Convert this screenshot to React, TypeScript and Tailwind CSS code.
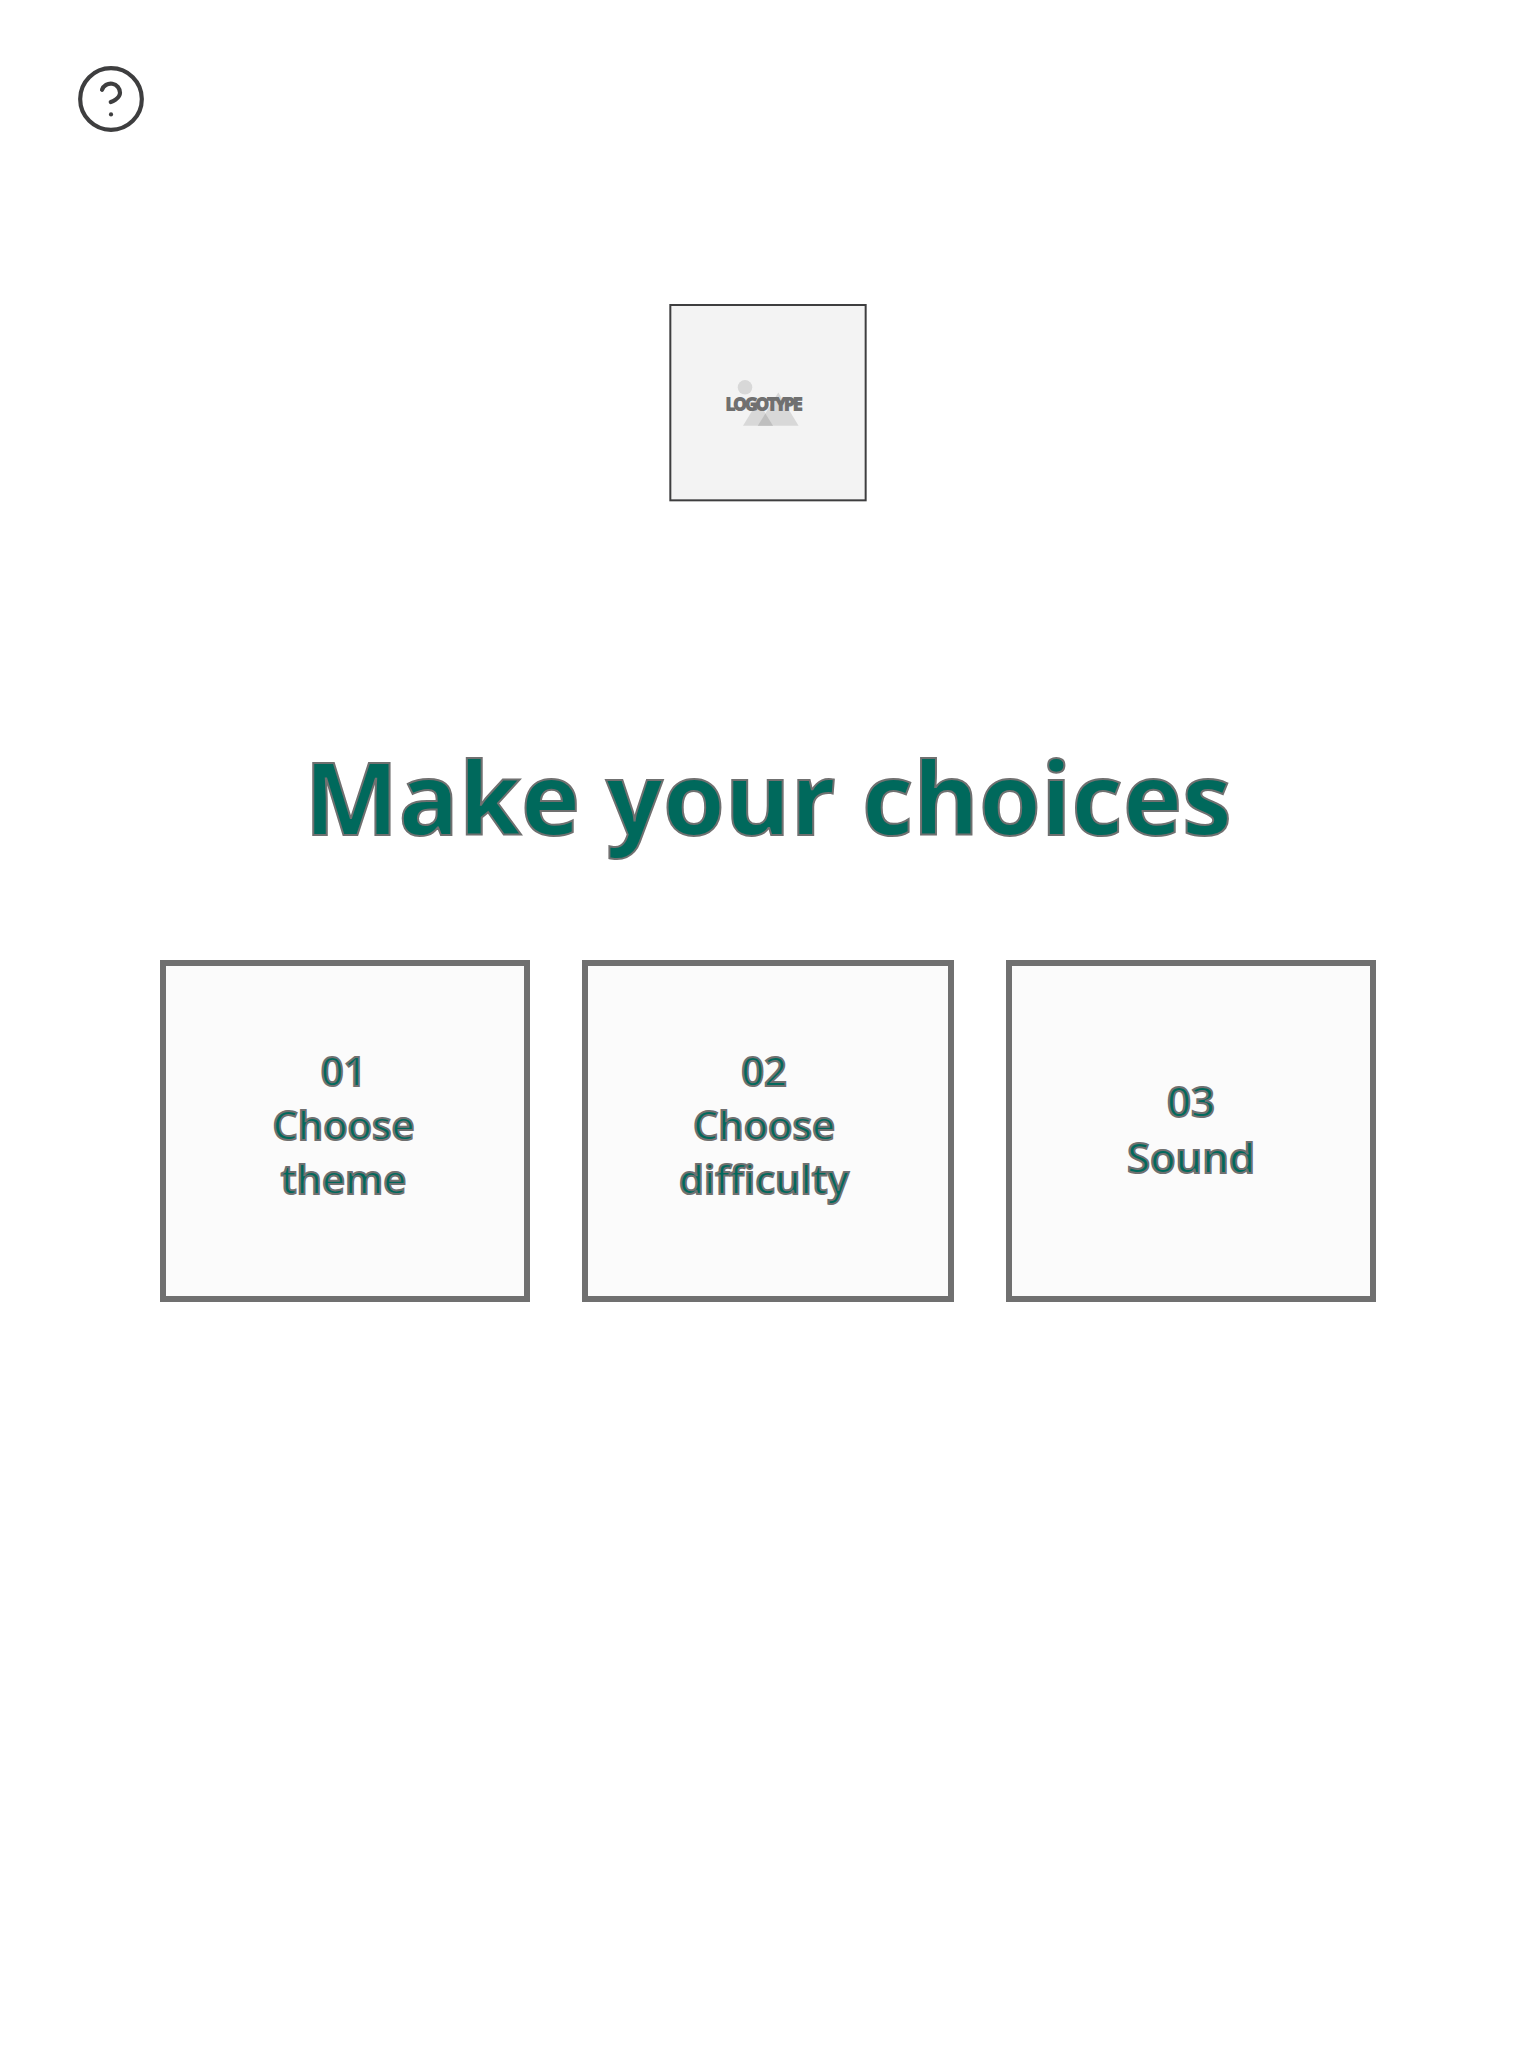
const outline = '[-webkit-text-stroke:2px_#707070]';

function HelpIcon() {
  return (
    <svg
      viewBox="0 0 24 24"
      className="size-[74px] text-[#3e3e3f]"
      fill="none"
      stroke="currentColor"
      strokeWidth="1.35"
      strokeLinecap="round"
      strokeLinejoin="round"
    >
      <circle cx="12" cy="12" r="10" />
      <path d="M9.09 9a3 3 0 0 1 5.83 1c0 2-3 3-3 3" />
      <path d="M12 17h.01" />
    </svg>
  );
}

function Logo() {
  return (
    <div className="relative size-[198px]">
      <svg viewBox="0 0 198 198" className="size-full">
        <rect x="1.33" y="1" width="195.33" height="195.33" fill="#f3f3f3" stroke="#3e3e3f" strokeWidth="2" />
        <circle cx="76" cy="83.3" r="7.3" fill="#d8d8d8" />
        <path d="M109.3 88.5 129.6 121.7H88.8Z" fill="#d8d8d8" />
        <path d="M89 97.3 104 121.7H74Z" fill="#d8d8d8" />
        <path d="M96.4 109.4 104 121.7H88.8Z" fill="#bfbfbf" />
      </svg>
      <span className={`absolute left-[57px] top-[88px] text-[16px] leading-[25px] font-semibold tracking-[-0.93px] text-[#707070] ${outline}`}>
        LOGOTYPE
      </span>
    </div>
  );
}

export default function App() {
  return (
    <main className="flex h-[2048px] w-[1536px] flex-col bg-white font-['Open_Sans',sans-serif]">
      <header className="pt-[62px] pl-[74px]">
        <button className="block" aria-label="Help">
          <HelpIcon />
        </button>
      </header>
      <div className="mt-[168px] flex justify-center">
        <Logo />
      </div>
      <h1 className={`mt-[226px] text-center text-[100px] leading-[136px] font-bold text-[#00695c] ${outline}`}>
        Make your choices
      </h1>
      <div className={`mt-[96px] flex justify-center gap-[52px] text-center text-[40px] leading-[54px] font-semibold text-[#00695c] [font-variant-ligatures:none] ${outline}`}>
        <button className="h-[342px] w-[370px] border-6 border-[#707070] bg-[#fbfbfb] pr-[3px] pb-[12px]">
          01
          <br />
          Choose
          <br />
          theme
        </button>
        <button className="h-[342px] w-[372px] border-6 border-[#707070] bg-[#fbfbfb] pr-[8px] pb-[12px]">
          02
          <br />
          Choose
          <br />
          difficulty
        </button>
        <button className="h-[342px] w-[370px] border-6 border-[#707070] bg-[#fbfbfb] pb-[5px] text-[42px] leading-[56px]">
          03
          <br />
          Sound
        </button>
      </div>
    </main>
  );
}
